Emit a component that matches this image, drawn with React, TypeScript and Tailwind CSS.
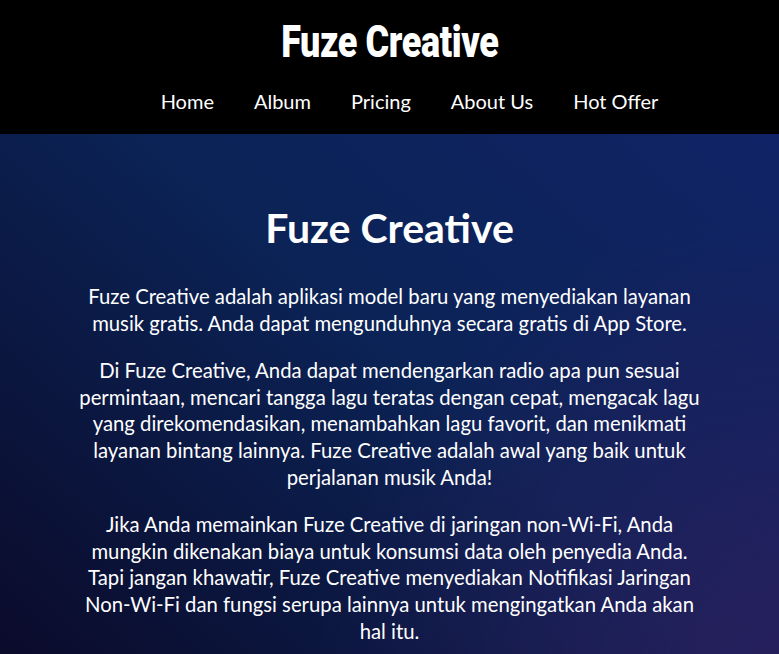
const navItems = ["Home", "Album", "Pricing", "About Us", "Hot Offer"];

const paragraphs = [
  [
    "Fuze Creative adalah aplikasi model baru yang menyediakan layanan",
    "musik gratis. Anda dapat mengunduhnya secara gratis di App Store.",
  ],
  [
    "Di Fuze Creative, Anda dapat mendengarkan radio apa pun sesuai",
    "permintaan, mencari tangga lagu teratas dengan cepat, mengacak lagu",
    "yang direkomendasikan, menambahkan lagu favorit, dan menikmati",
    "layanan bintang lainnya. Fuze Creative adalah awal yang baik untuk",
    "perjalanan musik Anda!",
  ],
  [
    "Jika Anda memainkan Fuze Creative di jaringan non-Wi-Fi, Anda",
    "mungkin dikenakan biaya untuk konsumsi data oleh penyedia Anda.",
    "Tapi jangan khawatir, Fuze Creative menyediakan Notifikasi Jaringan",
    "Non-Wi-Fi dan fungsi serupa lainnya untuk mengingatkan Anda akan",
    "hal itu.",
  ],
];

const App = () => {
  return (
    <div className="min-h-screen font-['Lato','Open_Sans',sans-serif] text-white bg-[radial-gradient(circle_at_100%_100%,rgba(52,30,96,0.7),transparent_45%),linear-gradient(to_top_right,#0b0a29,#0b2356_50%,#12236a)]">
      <header className="bg-black h-[134px] pt-[14px]">
        <div className="text-center">
          <h1 className="inline-block scale-x-[0.8] text-[45px] leading-[56px] font-['Impact','Roboto',sans-serif] font-black tracking-[-0.5px]">
            Fuze Creative
          </h1>
        </div>
        <ul className="pl-10 mt-[18px] flex justify-center">
          {navItems.map((item) => (
            <li key={item} className="mx-5 text-[20px] leading-[26px]">
              <a href="#">{item}</a>
            </li>
          ))}
        </ul>
      </header>
      <main className="pt-[68px] pb-10 px-4 flex flex-col items-center text-center">
        <h2 className="text-[41px] leading-[52px] font-bold">Fuze Creative</h2>
        <div className="mt-[29px] flex flex-col gap-[21px] text-[20.3px] leading-[26.6px]">
          {paragraphs.map((lines, i) => (
            <p key={i} className="whitespace-nowrap">
              {lines.map((line, j) => (
                <span key={j} className="block">
                  {line}
                </span>
              ))}
            </p>
          ))}
        </div>
      </main>
    </div>
  );
};

export default App;
